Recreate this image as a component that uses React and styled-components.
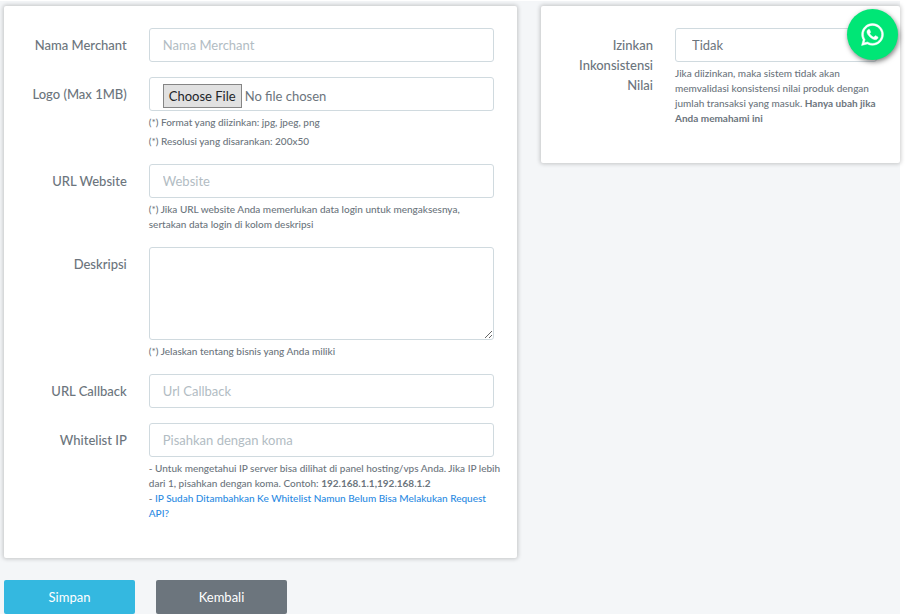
import React from 'react';
import styled, { createGlobalStyle } from 'styled-components';
import { FaWhatsapp } from 'react-icons/fa';

const GlobalStyle = createGlobalStyle`
  * {
    box-sizing: border-box;
  }

  body {
    margin: 0;
    background-color: #FFFFFF;
    font-family: Lato, "Liberation Sans", sans-serif;
    font-size: 13px;
    color: #6C757D;
  }
`;

const Page = styled.main`
  min-height: 100vh;
  padding: 5px 0 0 4px;
  background-color: #F4F6F8;
  border-top: 1px solid #FFFFFF;
  margin-right: 5px;
`;

const Columns = styled.div`
  display: grid;
  grid-template-columns: 513fr 359fr;
  align-items: start;
  gap: 24px;
`;

const Card = styled.section`
  padding: 22px 23px;
  background-color: #FFFFFF;
  border-radius: 2px;
  box-shadow: 0 0 4px 1px rgba(0, 0, 0, 0.2);
`;

const FormRow = styled.div`
  display: grid;
  grid-template-columns: ${props => props.$narrow ? '89fr 202fr' : '100fr 346fr'};
  gap: 22px;
  margin-bottom: 15px;
`;

const Label = styled.label`
  padding-top: 7px;
  font-weight: 500;
  line-height: 20px;
  text-align: right;
`;

const Field = styled.div`
  min-width: 0;
`;

const Input = styled.input`
  display: block;
  width: 100%;
  height: 34px;
  padding: 6px 13px;
  border: 1px solid #D0DADF;
  border-radius: 3px;
  background-color: #FFFFFF;
  font: inherit;
  color: #6C757D;

  &::placeholder {
    color: #B2BCC3;
    opacity: 1;
  }
`;

const FileInput = styled(Input)`
  &::file-selector-button {
    height: 24px;
    margin: 0 3px 0 0;
    padding: 0 5px;
    border: 1px solid #858585;
    border-radius: 0;
    background-color: #E1E1E1;
    font: inherit;
    color: #212529;
  }
`;

const TextArea = styled.textarea`
  display: block;
  width: 100%;
  height: 93px;
  padding: 6px 13px;
  border: 1px solid #D0DADF;
  border-radius: 3px;
  background-color: #FFFFFF;
  font: inherit;
  color: #6C757D;
`;

const Select = styled.select`
  display: block;
  width: 100%;
  height: 34px;
  padding: 6px 16px;
  border: 1px solid #D0DADF;
  border-radius: 3px;
  background-color: #FFFFFF;
  appearance: none;
  font: inherit;
  color: #6C757D;
`;

const Hint = styled.small`
  display: block;
  margin-top: 4px;
  margin-right: ${props => props.$wide ? '-12px' : '0'};
  font-size: 10px;
  font-weight: 500;
  line-height: 15px;
`;

const HelpLink = styled.a`
  color: #2A8AE2;
  text-decoration: none;
`;

const Actions = styled.div`
  display: flex;
  gap: 21px;
  margin-top: 22px;
`;

const Button = styled.button`
  width: 131px;
  height: 34px;
  border: none;
  border-radius: 2px;
  background-color: ${props => props.$secondary ? '#6C757D' : '#34B8E0'};
  font: inherit;
  color: #FFFFFF;
  cursor: pointer;
`;

const ChatButton = styled.a`
  position: fixed;
  top: 9px;
  right: 7px;
  display: flex;
  align-items: center;
  justify-content: center;
  width: 51px;
  height: 51px;
  border-radius: 50%;
  background-color: #00E676;
  box-shadow: 1px 2px 5px rgba(0, 0, 0, 0.5);
  font-size: 25px;
  color: #FFFFFF;

  svg {
    stroke-width: 10px;
  }
`;

function App() {
  return (
    <>
      <GlobalStyle />
      <Page>
        <Columns>
          <Card>
            <FormRow>
              <Label htmlFor="name">Nama Merchant</Label>
              <Field>
                <Input id="name" type="text" placeholder="Nama Merchant" />
              </Field>
            </FormRow>
            <FormRow>
              <Label htmlFor="logo">Logo (Max 1MB)</Label>
              <Field>
                <FileInput id="logo" type="file" accept=".jpg,.jpeg,.png" />
                <Hint>(*) Format yang diizinkan: jpg, jpeg, png</Hint>
                <Hint>(*) Resolusi yang disarankan: 200x50</Hint>
              </Field>
            </FormRow>
            <FormRow>
              <Label htmlFor="website">URL Website</Label>
              <Field>
                <Input id="website" type="text" placeholder="Website" />
                <Hint>
                  (*) Jika URL website Anda memerlukan data login untuk mengaksesnya,
                  <br />
                  sertakan data login di kolom deskripsi
                </Hint>
              </Field>
            </FormRow>
            <FormRow>
              <Label htmlFor="description">Deskripsi</Label>
              <Field>
                <TextArea id="description" />
                <Hint>(*) Jelaskan tentang bisnis yang Anda miliki</Hint>
              </Field>
            </FormRow>
            <FormRow>
              <Label htmlFor="callback">URL Callback</Label>
              <Field>
                <Input id="callback" type="text" placeholder="Url Callback" />
              </Field>
            </FormRow>
            <FormRow>
              <Label htmlFor="whitelist">Whitelist IP</Label>
              <Field>
                <Input id="whitelist" type="text" placeholder="Pisahkan dengan koma" />
                <Hint $wide>
                  - Untuk mengetahui IP server bisa dilihat di panel hosting/vps Anda. Jika IP lebih
                  {' '}dari 1, pisahkan dengan koma. Contoh: <b>192.168.1.1,192.168.1.2</b>
                  <br />
                  - <HelpLink href="#whitelist">IP Sudah Ditambahkan Ke Whitelist Namun Belum Bisa Melakukan Request <br />API?</HelpLink>
                </Hint>
              </Field>
            </FormRow>
          </Card>

          <Card>
            <FormRow $narrow>
              <Label htmlFor="inconsistency">Izinkan Inkonsistensi Nilai</Label>
              <Field>
                <Select id="inconsistency" defaultValue="0">
                  <option value="0">Tidak</option>
                  <option value="1">Ya</option>
                </Select>
                <Hint>
                  Jika diizinkan, maka sistem tidak akan memvalidasi konsistensi nilai produk dengan
                  jumlah transaksi yang masuk. <b>Hanya ubah jika Anda memahami ini</b>
                </Hint>
              </Field>
            </FormRow>
          </Card>
        </Columns>

        <Actions>
          <Button type="submit">Simpan</Button>
          <Button type="button" $secondary>Kembali</Button>
        </Actions>
      </Page>
      <ChatButton href="#chat" aria-label="WhatsApp">
        <FaWhatsapp />
      </ChatButton>
    </>
  );
}

export default App;
